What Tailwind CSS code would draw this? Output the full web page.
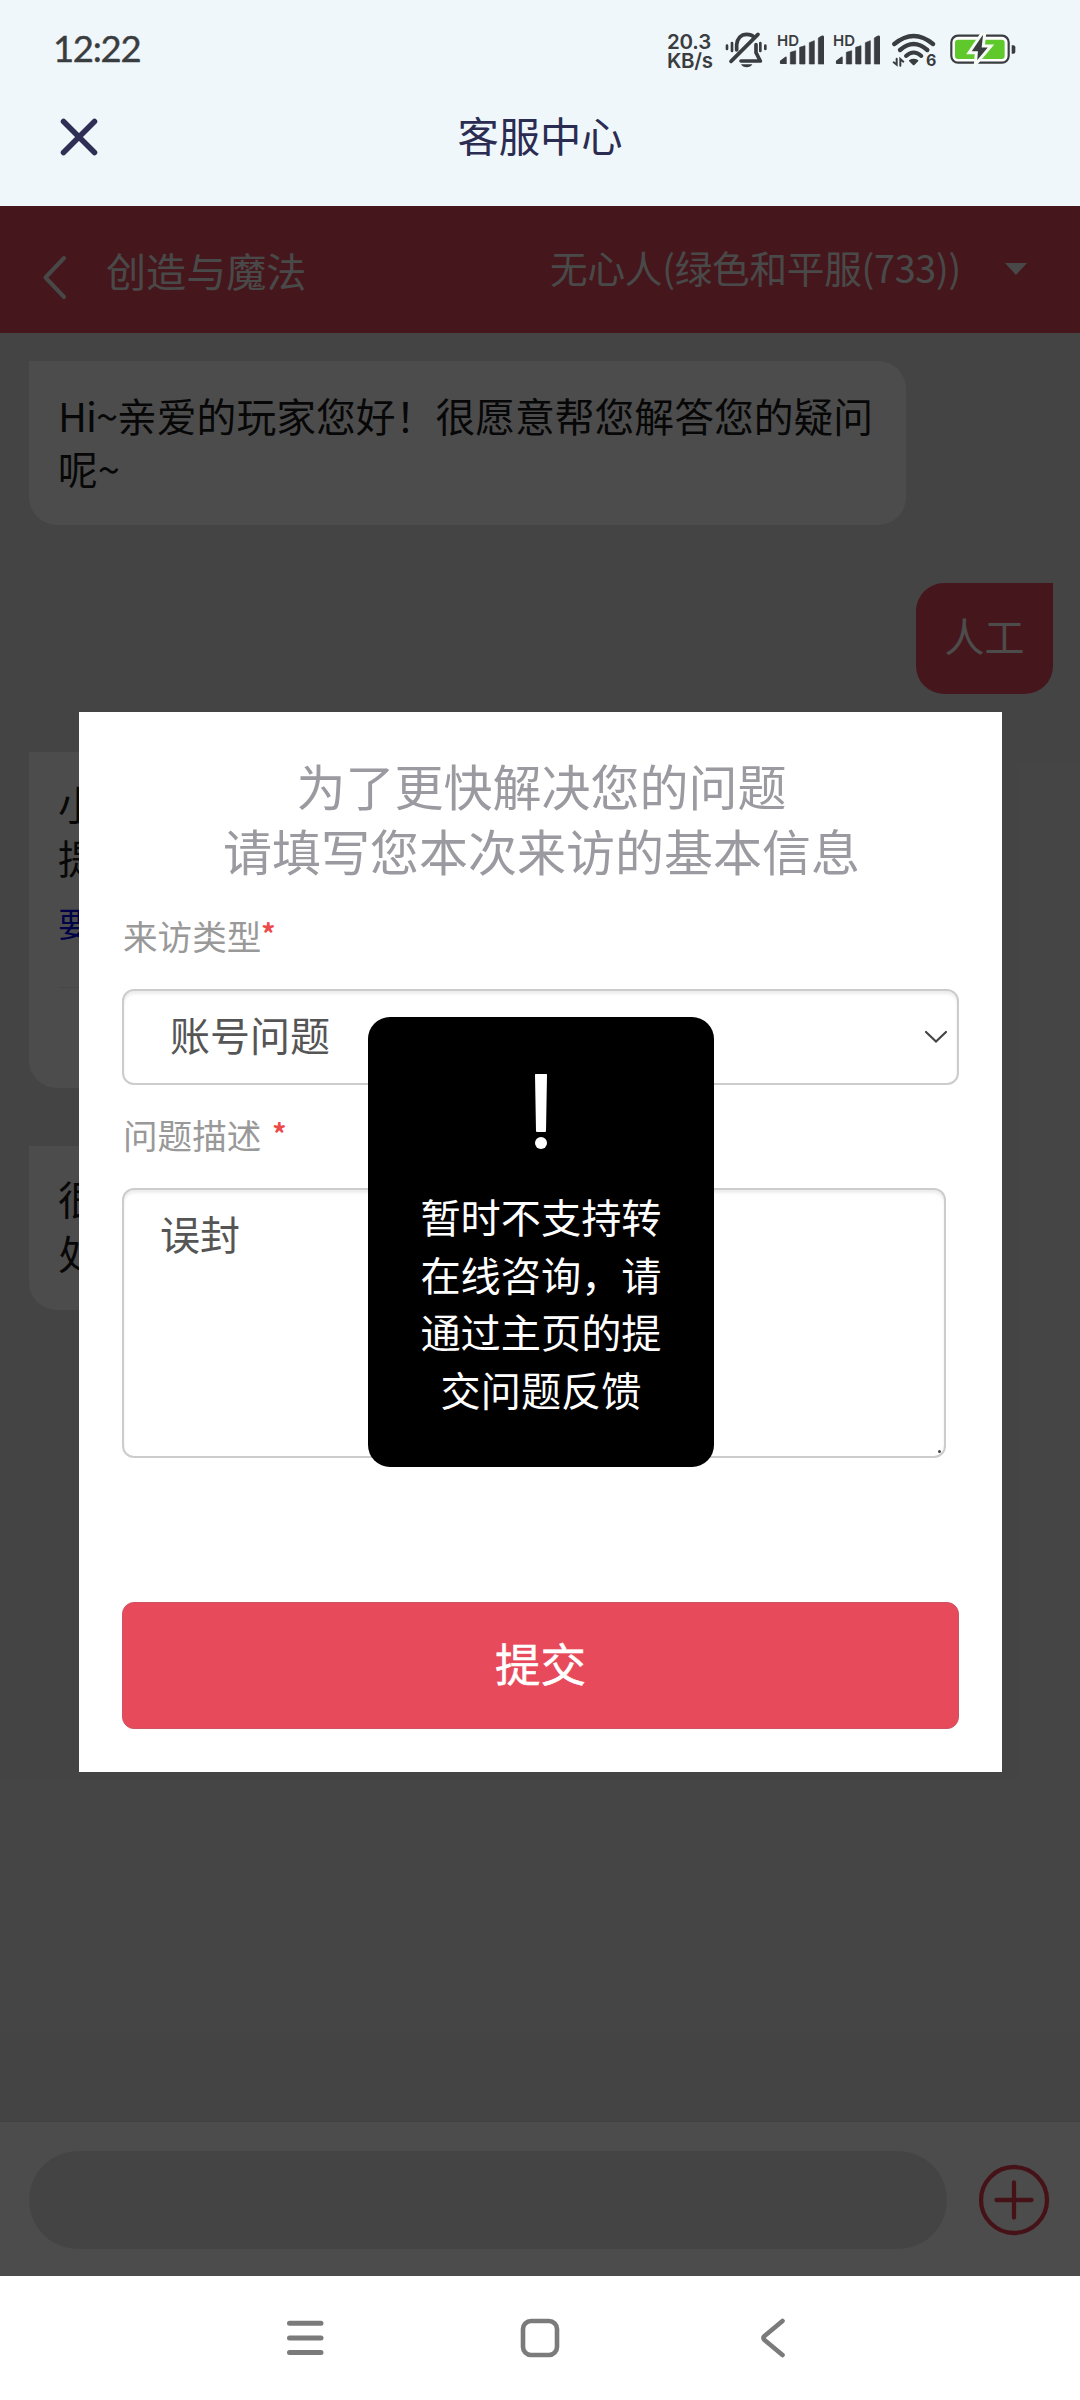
<!DOCTYPE html>
<html lang="zh-CN">
<head>
<meta charset="utf-8">
<title>客服中心</title>
<script src="https://cdn.jsdelivr.net/npm/@tailwindcss/browser@4"></script>
</head>
<body class="bg-white">
<div class="flex h-[2400px] w-[1080px] flex-col overflow-hidden font-['Noto_Sans_CJK_SC',sans-serif] whitespace-nowrap">

  <!-- status bar and title -->
  <header class="flex h-[206px] flex-col bg-[#f0f7fa]">
    <div class="flex h-[100px] items-center justify-between pl-[53px] pr-[64px] text-[#3a3d3f]">
      <div class="-mt-[3px] font-['Lato',sans-serif] text-[36.500px] font-normal leading-none tracking-[-1.3px] [-webkit-text-stroke:0.4px_#3a3d3f]">12:22</div>
      <div class="flex h-[100px] items-center">
        <div class="mt-[2px] mr-[10px] w-[48px] font-['Inter',sans-serif] text-[20.5px] font-semibold"><div class="h-[19px] leading-[19px] tracking-[-0.2px]">20.3</div><div class="h-[19px] leading-[19px] tracking-[-0.3px]">KB/s</div></div>
        <svg class="mr-[11px] h-[100px] w-[42px]" viewBox="255 0 126 300" fill="none" stroke="#3a3d3f" stroke-width="11" stroke-linecap="round" stroke-linejoin="round">
          <path d="M290 150V134C292 115 303 103 320 103C330 103 337 106 342 111"/>
          <path d="M348 134V158L361 183H303"/>
          <path d="M354 103L273 184"/>
          <path d="M303 193C308 205 332 205 337 193Z" fill="#3a3d3f" stroke="none"/>
          <path d="M276 129V153M261 137V147M361 129V153M376 137V147" stroke-width="8"/>
        </svg>
        <div class="relative mr-[10px] h-[100px] w-[46px]">
          <span class="absolute left-[-1px] top-[33px] font-['Inter',sans-serif] text-[15px] font-semibold leading-[16px]">HD</span>
          <svg class="h-[100px] w-[46px]" viewBox="414 0 138 300" fill="#3a3d3f"><path d="M420 182L436 170Q440 168 440 173V192H424Q418 192 420 182Z"/><path d="M451 157L467 152V192H451ZM479 142L495 137V192H479ZM508 128L523 122V192H508ZM535 114Q552 102 552 112V192H535Z" stroke="#3a3d3f" stroke-linejoin="round" stroke-width="2"/></svg>
        </div>
        <div class="relative mr-[12px] h-[100px] w-[46px]">
          <span class="absolute left-[-1px] top-[33px] font-['Inter',sans-serif] text-[15px] font-semibold leading-[16px]">HD</span>
          <svg class="h-[100px] w-[46px]" viewBox="414 0 138 300" fill="#3a3d3f"><path d="M420 182L436 170Q440 168 440 173V192H424Q418 192 420 182Z"/><path d="M451 157L467 152V192H451ZM479 142L495 137V192H479ZM508 128L523 122V192H508ZM535 114Q552 102 552 112V192H535Z" stroke="#3a3d3f" stroke-linejoin="round" stroke-width="2"/></svg>
        </div>
        <div class="relative mr-[14px] h-[100px] w-[44px]">
          <svg class="h-[100px] w-[44px]" viewBox="757 0 132 300" fill="none" stroke="#3a3d3f" stroke-linecap="round">
            <path d="M764 132Q822 84 880 132" stroke-width="13"/><path d="M781 150Q822 114 863 150" stroke-width="13"/><path d="M799 168Q822 147 845 168" stroke-width="12"/>
            <path d="M810 182Q822 174 834 182L822 194Z" fill="#3a3d3f" stroke="#3a3d3f" stroke-width="4" stroke-linejoin="round"/>
            <path d="M771 176V194L762 187M782 197V177L791 185" stroke-width="6"/>
          </svg>
          <span class="absolute left-[34px] top-[51px] font-['Inter',sans-serif] text-[16px] font-bold leading-[18px]">6</span>
        </div>
        <svg class="h-[100px] w-[66px]" viewBox="929 0 198 300">
          <rect x="933" y="107" width="172" height="81" rx="20" fill="#fff" stroke="#3a3d3f" stroke-width="6.500"/>
          <rect x="944" y="119" width="149" height="58" rx="9" fill="#5fc92c"/>
          <path d="M1114 136H1119Q1125 136 1125 142V155Q1125 161 1119 161H1114Z" fill="#3a3d3f"/>
          <path d="M1024 102L986 158H1008L1005 194L1052 138H1029L1033 102Z" fill="#3a3d3f" stroke="#f5fbf5" stroke-width="9"/>
        </svg>
      </div>
    </div>
    <div class="relative flex h-[74px] items-center justify-center">
      <svg class="absolute left-[56px] top-[14px] size-[46px]" viewBox="0 0 46 46" fill="none" stroke="#2f2e55" stroke-width="5.500" stroke-linecap="round"><path d="M7.500 7.500L38.500 38.500M38.500 7.500L7.500 38.500"/></svg>
      <h1 class="-mt-[6px] text-[41.300px] leading-[60px] text-[#2b2c52]">客服中心</h1>
    </div>
  </header>

  <!-- chat page -->
  <main class="relative flex h-[2070px] flex-col bg-[#e5e5e5]">
    <div class="flex h-[127px] items-center bg-[#e64a5b] text-[#f5f5f5]">
      <svg class="ml-[39px] mt-[15px] h-[46px] w-[30px]" viewBox="0 0 30 46" fill="none" stroke="#f0f0f0" stroke-width="4" stroke-linecap="round" stroke-linejoin="round"><path d="M25 4L6.500 23.500L25 43"/></svg>
      <div class="ml-[37px] mt-px text-[40.100px] leading-[60px]">创造与魔法</div>
      <div class="ml-auto -mt-[5px] text-[37.600px] leading-[60px] tracking-[-0.2px]">无心人(绿色和平服(733))</div>
      <svg class="-mt-[2px] ml-[44px] mr-[53px] h-[12px] w-[22px]" viewBox="0 0 22 12" fill="#f0f0f0"><path d="M0 0H22L11 12Z"/></svg>
    </div>

    <div class="flex flex-1 flex-col items-start gap-[58px] pt-[28px] pl-[29px] pr-[27px] text-[40px] leading-[53.500px] text-[#1a1a1a]">
      <div class="h-[164px] w-[877px] rounded-[28px] rounded-tl-none bg-white pt-[27px] pl-[29px] text-[39.800px] leading-[53px]"><span class="tracking-[-1px]">Hi~</span>亲爱的玩家您好！很愿意帮您解答您的疑问<br>呢~</div>
      <div class="h-[111px] w-[137px] self-end rounded-[28px] rounded-tr-none bg-[#e64a5b] pt-[26px] text-center text-white">人工</div>
      <div class="h-[336px] w-[877px] rounded-[28px] rounded-tl-none bg-white pt-[25px] pl-[29px]">小<br>提<div class="mt-[12px] mr-[29px] h-[92px] border-b border-[#eee] text-[34px] text-[#0000ee]">要</div></div>
      <div class="h-[164px] w-[877px] rounded-[28px] rounded-tl-none bg-white pt-[26px] pl-[29px]">很<br>处</div>
    </div>

    <div class="flex h-[155px] items-center border-t border-[#d6d6d6] bg-white pt-[2px] pl-[29px]">
      <div class="h-[98px] w-[918px] rounded-full bg-[#e5e5e5]"></div>
      <svg class="ml-[31px] size-[72px]" viewBox="0 0 72 72" fill="none" stroke="#e6404f" stroke-width="4.300" stroke-linecap="round"><circle cx="36" cy="36" r="33"/><path d="M18.500 36H53.500M36 18.500V53.500"/></svg>
    </div>

    <div class="absolute inset-0 bg-black/70"></div>

    <!-- visit form -->
    <form class="absolute left-[79px] top-[506px] flex h-[1060px] w-[923px] flex-col bg-white px-[43px]">
      <h2 class="mt-[40px] ml-[2px] text-center text-[49px] leading-[65px] text-[#9a9aa0]">为了更快解决您的问题<br>请填写您本次来访的基本信息</h2>
      <div class="mt-[28px] ml-[1px] flex h-[50px] text-[34.600px] leading-[50px] text-[#999]">来访类型<span class="text-[#ee4a4a] text-[28px] font-bold leading-[46px]">*</span></div>
      <div class="mt-[29px] flex h-[96px] w-[837px] items-center justify-between rounded-[12px] border-2 border-[#ccc] pl-[46px] pr-[9px] shadow-[inset_0_3px_3px_rgba(0,0,0,0.075)]">
        <span class="-mt-[6px] text-[40px] leading-[60px] text-[#555]">账号问题</span>
        <svg class="h-[14px] w-[24px]" viewBox="0 0 24 14" fill="none" stroke="#444" stroke-width="2.200" stroke-linecap="round"><path d="M2 2L12 11.500L22 2"/></svg>
      </div>
      <div class="mt-[24px] ml-[1px] flex h-[50px] text-[34.600px] leading-[50px] text-[#999]">问题描述<span class="ml-[11px] text-[#ee4a4a] text-[28px] font-bold leading-[48px]">*</span></div>
      <div class="relative mt-[29px] h-[270px] w-[824px] rounded-[12px] border-2 border-[#ccc] pt-[13px] pl-[36px] text-[40px] leading-[60px] text-[#555] shadow-[inset_0_3px_3px_rgba(0,0,0,0.075)]">误封<span class="absolute right-[3px] bottom-[3px] size-[3px] rounded-full bg-[#444]"></span></div>
      <div class="mt-[144px] h-[127px] w-[837px] rounded-[12px] border border-[#cf5363] bg-[#e64a5b] text-center text-[45.500px] leading-[119px] text-white [-webkit-text-stroke:0.5px_#fff]">提交</div>
    </form>

    <!-- toast -->
    <div class="absolute left-[368px] top-[811px] flex h-[450px] w-[346px] flex-col items-center rounded-[22px] bg-black">
      <svg class="mt-[56px] h-[78px] w-[16px]" viewBox="0 0 16 78" fill="#fff"><path d="M2.500 1H13.500Q14 1 14 2L13 58Q13 59 12 59H4Q3 59 3 58L2 2Q2 1 2.500 1Z"/><circle cx="8" cy="70" r="6"/></svg>
      <p class="mt-[36px] text-center text-[40.200px] leading-[57.700px] text-white">暂时不支持转<br>在线咨询，请<br>通过主页的提<br>交问题反馈</p>
    </div>
  </main>

  <!-- system navigation -->
  <nav class="flex h-[124px] items-center bg-white pl-[285px]">
    <svg class="h-[40px] w-[40px]" viewBox="0 0 40 40" stroke="#7b7b7b" stroke-width="5" stroke-linecap="round"><path d="M4.500 5.300H36M4.500 20H36M4.500 34.600H36"/></svg>
    <svg class="ml-[195px] h-[40px] w-[40px]" viewBox="0 0 40 40" fill="none" stroke="#7b7b7b" stroke-width="4.600"><rect x="3" y="3" width="34" height="34" rx="8"/></svg>
    <svg class="ml-[198px] h-[44px] w-[32px]" viewBox="0 0 32 44" fill="none" stroke="#7b7b7b" stroke-width="4.600" stroke-linecap="round" stroke-linejoin="round"><path d="M24.500 5L6.500 20Q4.500 22 6.500 24L24.500 39"/></svg>
  </nav>
</div>
</body>
</html>
